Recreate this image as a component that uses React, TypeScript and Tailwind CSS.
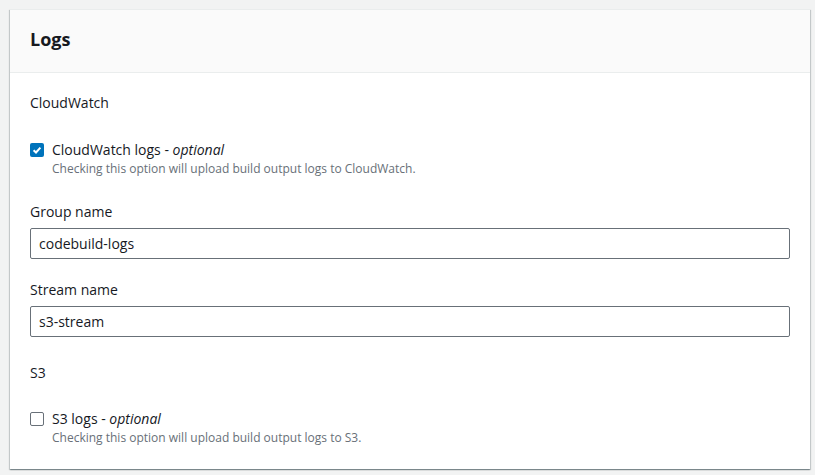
import React from "react";

function Check({ checked }: { checked: boolean }) {
  if (checked) {
    return (
      <div className="w-[14px] h-[14px] rounded-[2px] bg-[#0073bb] flex items-center justify-center shrink-0">
        <svg width="10" height="10" viewBox="0 0 10 10">
          <path d="M1.6 5.2 L4 7.5 L8.4 2.6" fill="none" stroke="#ffffff" strokeWidth="2" />
        </svg>
      </div>
    );
  }
  return <div className="w-[14px] h-[14px] rounded-[2px] border border-[#687078] bg-white shrink-0" />;
}

function CheckRow({ checked, title, desc }: { checked: boolean; title: string; desc: string }) {
  return (
    <div className="flex flex-col">
      <div className="flex items-center gap-[8px] h-[22px]">
        <Check checked={checked} />
        <span className="text-[14px] leading-[22px] text-[#16191f]">
          {title} - <i>optional</i>
        </span>
      </div>
      <div className="pl-[22px] text-[12px] leading-[16px] text-[#687078]">{desc}</div>
    </div>
  );
}

function Field({ label, value }: { label: string; value: string }) {
  return (
    <div className="flex flex-col">
      <div className="text-[14px] leading-[22px] text-[#16191f] mb-[5px]">{label}</div>
      <div className="h-[31px] border border-[#687078] rounded-[2px] bg-white px-[8px] flex items-center text-[14px] text-[#16191f]">
        {value}
      </div>
    </div>
  );
}

export default function App() {
  return (
    <div
      className="min-h-screen bg-[#f2f3f3] pt-[9px] pl-[10px]"
      style={{ fontFamily: '"Open Sans", Roboto, Arial, sans-serif' }}
    >
      <div className="w-[800px] h-[460px] bg-white border-t border-[#eaeded] shadow-[0_1px_1px_0_rgba(0,28,36,0.3),1px_1px_1px_0_rgba(0,28,36,0.15),-1px_1px_1px_0_rgba(0,28,36,0.15)] flex flex-col">
        <div className="h-[63px] bg-[#fafafa] border-b border-[#eaeded] px-[20px] pt-[18px]">
          <h2 className="text-[18px] leading-[22px] font-bold text-[#16191f]">Logs</h2>
        </div>
        <div className="px-[20px] pt-[19px] flex flex-col">
          <div className="text-[14px] leading-[22px] text-[#16191f]">CloudWatch</div>
          <div className="mt-[25px]">
            <CheckRow
              checked
              title="CloudWatch logs"
              desc="Checking this option will upload build output logs to CloudWatch."
            />
          </div>
          <div className="mt-[24px]">
            <Field label="Group name" value="codebuild-logs" />
          </div>
          <div className="mt-[20px]">
            <Field label="Stream name" value="s3-stream" />
          </div>
          <div className="mt-[25px] text-[14px] leading-[22px] text-[#16191f]">S3</div>
          <div className="mt-[24px]">
            <CheckRow
              checked={false}
              title="S3 logs"
              desc="Checking this option will upload build output logs to S3."
            />
          </div>
        </div>
      </div>
    </div>
  );
}
